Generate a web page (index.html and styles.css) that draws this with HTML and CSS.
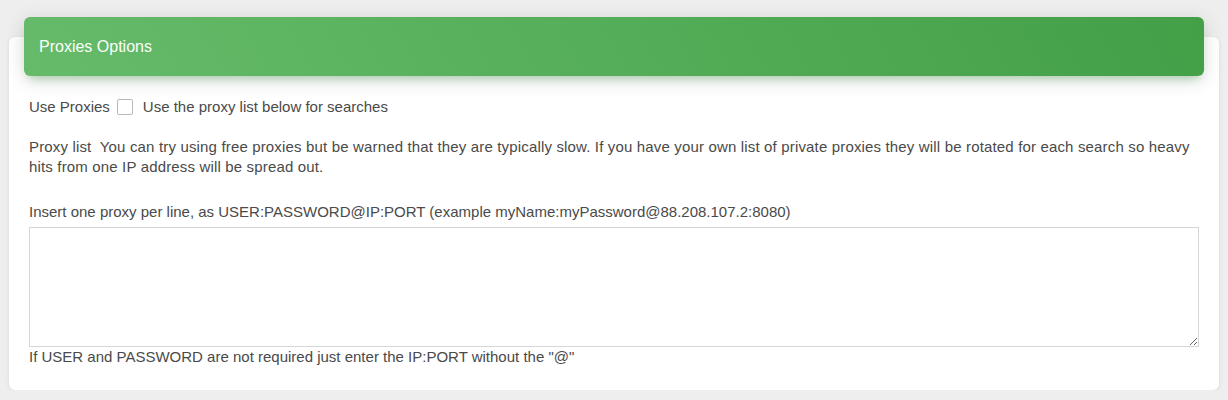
FILE: index.html
```html
<!DOCTYPE html>
<html>
<head>
<meta charset="utf-8">
<link rel="stylesheet" href="styles.css">
</head>
<body>
<div class="card">
  <div class="card-header">
    <h4 class="card-title">Proxies Options</h4>
  </div>
  <div class="card-body">
    <div class="row-check">
      <span>Use Proxies</span>
      <span class="checkbox"></span>
      <span>Use the proxy list below for searches</span>
    </div>
    <p class="para para-desc">Proxy list&nbsp; You can try using free proxies but be warned that they are typically slow. If you have your own list of private proxies they will be rotated for each search so heavy hits from one IP address will be spread out.</p>
    <p class="para para-insert">Insert one proxy per line, as USER:PASSWORD@IP:PORT (example myName:myPassword@88.208.107.2:8080)</p>
    <textarea class="proxies"></textarea>
    <div class="help">If USER and PASSWORD are not required just enter the IP:PORT without the "@"</div>
  </div>
</div>
</body>
</html>
```
FILE: styles.css
```css
html, body {
  margin: 0;
  padding: 0;
  background: #eeeeef;
  font-family: "Liberation Sans", Arial, sans-serif;
  color: #4a4a4a;
}
body {
  padding: 37px 9px 0;
}
.card {
  display: flow-root;
  background: #fff;
  border-radius: 6px;
  box-shadow: 0 1px 4px rgba(0,0,0,0.08);
  height: 353px;
  box-sizing: border-box;
}
.card-header {
  margin: -20px 15px 0;
  height: 59px;
  box-sizing: border-box;
  padding: 0 15px;
  display: flex;
  align-items: center;
  border-radius: 6px;
  background: linear-gradient(60deg, #66bb6a, #43a047);
  box-shadow: 0 4px 20px 0 rgba(0,0,0,0.14), 0 7px 10px -5px rgba(76,175,80,0.4);
}
.card-title {
  margin: 0;
  color: #fbfffb;
  font-size: 16px;
  font-weight: 400;
  padding-top: 1px;
}
.card-body {
  padding: 21px 20px 0;
  font-size: 15px;
  line-height: 20px;
}
.row-check {
  display: flex;
  align-items: center;
  height: 20px;
}
.checkbox {
  width: 14px;
  height: 14px;
  border: 1px solid #b9b9b9;
  border-radius: 2px;
  margin: 0 10px 0 7px;
  background: #fff;
}
.para {
  margin: 20px 0 0;
}
.para-desc {
  letter-spacing: 0.16px;
}
.para-insert {
  margin-top: 25px;
}
.proxies {
  display: block;
  box-sizing: border-box;
  width: 100%;
  height: 120px;
  margin: 5px 0 0;
  border: 1px solid #d6d6d6;
  border-radius: 0;
  resize: vertical;
  font-family: inherit;
  outline: none;
}
.help {
  margin-top: 0;
}
```
